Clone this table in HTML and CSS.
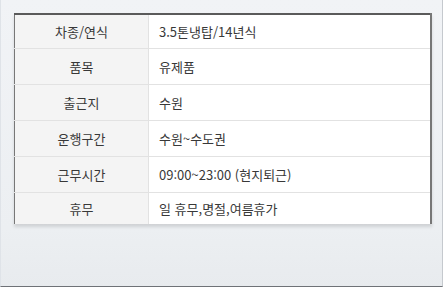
FILE: index.html
```html
<!DOCTYPE html>
<html lang="ko">
<head>
  <meta charset="UTF-8" />
  <title>차량 정보</title>
  <link rel="stylesheet" href="styles.css">
</head>
<body>
  <div class="panel">
    <table class="info">
      <tr class="first"><th>차종/연식</th><td>3.5톤냉탑/14년식</td></tr>
      <tr><th>품목</th><td>유제품</td></tr>
      <tr><th>출근지</th><td>수원</td></tr>
      <tr><th>운행구간</th><td>수원~수도권</td></tr>
      <tr><th>근무시간</th><td>09:00~23:00 (현지퇴근)</td></tr>
      <tr class="last"><th>휴무</th><td>일 휴무,명절,여름휴가</td></tr>
    </table>
  </div>
</body>
</html>
```

FILE: styles.css
```css
body {
  margin: 0;
  font-family: "Noto Sans CJK KR", "Noto Sans", sans-serif;
}

.panel {
  width: 443px;
  height: 287px;
  padding-top: 13px;
  box-sizing: border-box;
  background: linear-gradient(to bottom, #f1f3f6, #eceff2 80%, #e8ebee);
  border: 1px solid #dfe3e8;
  border-top: none;
  border-bottom: 1px solid #6f7277;
  border-right: 1px solid #c5c9ce;
}

.info {
  margin-left: 13px;
  width: 418px;
  border-collapse: collapse;
  border-top: 2px solid #5a5a5a;
  border-left: 1px solid #777;
  border-right: 2px solid #777;
  box-shadow: 0 3px 3px rgba(0, 0, 0, 0.12);
  font-size: 13px;
  color: #383838;
}

.info th,
.info td {
  height: 35px;
  padding: 0;
  border-bottom: 1px solid #e2e2e2;
  font-weight: normal;
}

.info th {
  width: 133px;
  background: #f4f4f4;
  border-right: 1px solid #e2e2e2;
  text-align: center;
}

.info td {
  background: #fff;
  padding-left: 10px;
  text-align: left;
}

.info .first th,
.info .first td {
  height: 33px;
}

.info .last th,
.info .last td {
  height: 31px;
  border-bottom: none;
}
```
